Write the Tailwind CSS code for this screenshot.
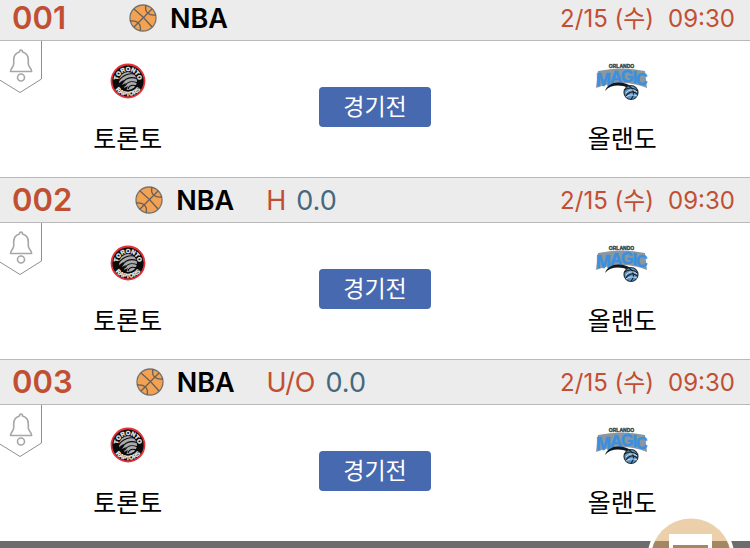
<!DOCTYPE html>
<html lang="ko">
<head>
    <meta charset="UTF-8">
    <meta name="viewport" content="width=device-width, initial-scale=1.0">
    <title>경기 목록</title>
    <script src="https://cdn.jsdelivr.net/npm/@tailwindcss/browser@4"></script>
</head>
<body class="flex min-h-screen flex-col bg-white text-black font-[Inter,'Noto_Sans_CJK_KR',sans-serif]">

    <!-- Shared icons -->
    <svg class="hidden" aria-hidden="true">
        <symbol id="icon-ball" viewBox="0 0 28 28">
            <circle cx="14" cy="14" r="13" fill="#f3a254" stroke="#77736f" stroke-width="1.3"/>
            <g fill="none" stroke="#66605a" stroke-width="1.3">
                <path d="M5 5Q15 13 23 23M23 5Q14 14 5 23"/>
                <path d="M17 1C15 8 20 12 27 11"/>
                <path d="M1 17C8 16 13 20 11 27"/>
            </g>
        </symbol>
        <symbol id="icon-bell" viewBox="0 0 43 53">
            <path d="M-1 -1H41.500V38L20 51.500L-1 38.500Z" fill="#fff" stroke="#8f8f8f" stroke-width="1"/>
            <g fill="none" stroke="#a6a6a6" stroke-width="1.600" stroke-linejoin="round">
                <path d="M21 9C20 9 19.500 10 19.500 11C15.500 12 13.700 15 13.700 19V23C13.700 26 10.500 27 10.500 30.500H31.700C31.700 27 28.300 26 28.300 23V19C28.300 15 26.500 12 22.500 11C22.500 10 22 9 21 9Z"/>
                <circle cx="21" cy="36.500" r="3.500"/>
            </g>
        </symbol>
        <symbol id="logo-raptors" viewBox="0 0 36 36">
            <circle cx="18" cy="18" r="16.500" fill="#0b0b0b" stroke="#e5333a" stroke-width="1.800"/>
            <path id="arc-top" d="M8 18A10 10 0 0 1 28 18" fill="none"/>
            <path id="arc-bottom" d="M3 18A15 15 0 0 0 33 18" fill="none"/>
            <circle cx="18" cy="18" r="9" fill="#a9abad"/>
            <g fill="none" stroke="#0b0b0b" stroke-width="1.100">
                <path d="M8 19C12 12 20 9 27 12"/>
                <path d="M12 21C15 15 20 13 28 16"/>
                <path d="M15 23C17 19 20 17 28 20"/>
                <path d="M18 26C19 23 21 21 27 23"/>
            </g>
            <path d="M10 28C6 23 9 19 14 17L12 22L16 20L14 25L18 23L16 28Z" fill="#0b0b0b"/>
            <g fill="#f0f0f0" stroke="#f0f0f0" stroke-width=".3" font-family="Liberation Sans" font-weight="700" font-size="6" text-anchor="middle">
                <text><textPath href="#arc-top" startOffset="50%">TORONTO</textPath></text>
                <text><textPath href="#arc-bottom" startOffset="50%">RAPTORS</textPath></text>
            </g>
        </symbol>
        <symbol id="logo-magic" viewBox="0 0 54 38">
            <text x="26.500" y="5" text-anchor="middle" font-family="Liberation Sans" font-weight="700" font-size="5" fill="#3b444c" stroke="#3b444c" stroke-width=".4">ORLANDO</text>
            <path d="M3 8Q27 3 50 8L52 25Q27 15 1 25Z" fill="#8b979f"/>
            <g font-family="Liberation Sans" font-weight="700" fill="#3b8fe0" stroke="#3b8fe0" stroke-width=".5">
                <text x="1" y="22.500" font-size="18">M</text>
                <text x="15" y="19.500" font-size="17">A</text>
                <text x="26" y="18.500" font-size="16">G</text>
                <text x="37.500" y="19.500" font-size="17">I</text>
                <text x="41" y="22" font-size="16">C</text>
            </g>
            <path d="M10 28C13 20 22 17 34 22L38 24L33 25C25 21 15 22 10 28Z" fill="#11171c"/>
            <circle cx="36" cy="29.500" r="7" fill="#5a97cb" stroke="#28333c" stroke-width="1.200"/>
            <path d="M29.500 27C34 24 39 25 42.500 28M31 33C34 28 39 28 42.500 31M34 23C39 26 40 32 36 36" fill="none" stroke="#19232c" stroke-width="1.100"/>
            <path d="M31 30C34 26 39 26 42 29M31 34C35 31 39 32 42 33" fill="none" stroke="#dfe7ee" stroke-width=".9"/>
        </symbol>
    </svg>

    <!-- List is scrolled slightly past the first row's top edge -->
    <main class="-mt-[5px]">
        <section>
            <header class="flex h-[46px] items-center border-y border-[#b9b9b9] bg-[#ececec] pr-[15px] pl-3 whitespace-nowrap">
                <span class="text-[31px] font-semibold text-[#c14f33]">001</span>
                <svg class="ml-[63px] size-7" aria-hidden="true"><use href="#icon-ball"/></svg>
                <h2 class="ml-[13px] pt-0.5 text-[27px] font-semibold">NBA</h2>
                <time class="ml-auto flex gap-3.5 pt-0.5 text-[24px] text-[#c14f33]"><span>2/15 (수)</span><span>09:30</span></time>
            </header>
            <div class="relative grid h-[136px] grid-cols-3 px-1">
                <button type="button" aria-label="알림" class="absolute top-0 left-0"><svg class="h-[53px] w-[43px]"><use href="#icon-bell"/></svg></button>
                <div class="flex flex-col items-center pt-[22px]">
                    <svg class="size-9" aria-hidden="true"><use href="#logo-raptors"/></svg>
                    <span class="mt-5 text-[25px] leading-10">토론토</span>
                </div>
                <div class="flex justify-center pt-[46px]">
                    <button type="button" class="h-10 w-28 rounded-[4px] bg-[#4769b0] text-[23px] leading-10 text-white">경기전</button>
                </div>
                <div class="flex flex-col items-center pt-[22px]">
                    <svg class="h-[38px] w-[54px]" aria-hidden="true"><use href="#logo-magic"/></svg>
                    <span class="mt-[18px] text-[25px] leading-10">올랜도</span>
                </div>
            </div>
        </section>

        <section>
            <header class="flex h-[46px] items-center border-y border-[#b9b9b9] bg-[#ececec] pr-[15px] pl-3 whitespace-nowrap">
                <span class="text-[31px] font-semibold text-[#c14f33]">002</span>
                <svg class="ml-[63px] size-7" aria-hidden="true"><use href="#icon-ball"/></svg>
                <h2 class="ml-[13px] pt-0.5 text-[27px] font-semibold">NBA</h2>
                <span class="ml-8 pt-0.5 text-[27px] text-[#c14f33]">H</span>
                <span class="ml-2.5 pt-0.5 text-[27px] text-[#44687d]">0.0</span>
                <time class="ml-auto flex gap-3.5 pt-0.5 text-[24px] text-[#c14f33]"><span>2/15 (수)</span><span>09:30</span></time>
            </header>
            <div class="relative grid h-[136px] grid-cols-3 px-1">
                <button type="button" aria-label="알림" class="absolute top-0 left-0"><svg class="h-[53px] w-[43px]"><use href="#icon-bell"/></svg></button>
                <div class="flex flex-col items-center pt-[22px]">
                    <svg class="size-9" aria-hidden="true"><use href="#logo-raptors"/></svg>
                    <span class="mt-5 text-[25px] leading-10">토론토</span>
                </div>
                <div class="flex justify-center pt-[46px]">
                    <button type="button" class="h-10 w-28 rounded-[4px] bg-[#4769b0] text-[23px] leading-10 text-white">경기전</button>
                </div>
                <div class="flex flex-col items-center pt-[22px]">
                    <svg class="h-[38px] w-[54px]" aria-hidden="true"><use href="#logo-magic"/></svg>
                    <span class="mt-[18px] text-[25px] leading-10">올랜도</span>
                </div>
            </div>
        </section>

        <section>
            <header class="flex h-[46px] items-center border-y border-[#b9b9b9] bg-[#ececec] pr-[15px] pl-3 whitespace-nowrap">
                <span class="text-[31px] font-semibold text-[#c14f33]">003</span>
                <svg class="ml-[63px] size-7" aria-hidden="true"><use href="#icon-ball"/></svg>
                <h2 class="ml-[13px] pt-0.5 text-[27px] font-semibold">NBA</h2>
                <span class="ml-8 pt-0.5 text-[27px] text-[#c14f33]">U/O</span>
                <span class="ml-2.5 pt-0.5 text-[27px] text-[#44687d]">0.0</span>
                <time class="ml-auto flex gap-3.5 pt-0.5 text-[24px] text-[#c14f33]"><span>2/15 (수)</span><span>09:30</span></time>
            </header>
            <div class="relative grid h-[136px] grid-cols-3 px-1">
                <button type="button" aria-label="알림" class="absolute top-0 left-0"><svg class="h-[53px] w-[43px]"><use href="#icon-bell"/></svg></button>
                <div class="flex flex-col items-center pt-[22px]">
                    <svg class="size-9" aria-hidden="true"><use href="#logo-raptors"/></svg>
                    <span class="mt-5 text-[25px] leading-10">토론토</span>
                </div>
                <div class="flex justify-center pt-[46px]">
                    <button type="button" class="h-10 w-28 rounded-[4px] bg-[#4769b0] text-[23px] leading-10 text-white">경기전</button>
                </div>
                <div class="flex flex-col items-center pt-[22px]">
                    <svg class="h-[38px] w-[54px]" aria-hidden="true"><use href="#logo-magic"/></svg>
                    <span class="mt-[18px] text-[25px] leading-10">올랜도</span>
                </div>
            </div>
        </section>
    </main>

    <footer class="flex-1 bg-[#6c6c6c]"></footer>

    <!-- Floating cart button -->
    <button type="button" aria-label="카트" class="fixed right-[14px] -bottom-14">
        <svg class="size-[90px]" viewBox="0 0 90 90">
            <circle cx="45" cy="45" r="42" fill="none" stroke="#fff" stroke-width="4"/>
            <circle cx="45" cy="45" r="40.500" fill="#d9a157" fill-opacity=".5"/>
            <path d="M23 20H66V60H23ZM27 31V56H62V31Z" fill="#fff" fill-rule="evenodd"/>
        </svg>
    </button>
</body>
</html>
